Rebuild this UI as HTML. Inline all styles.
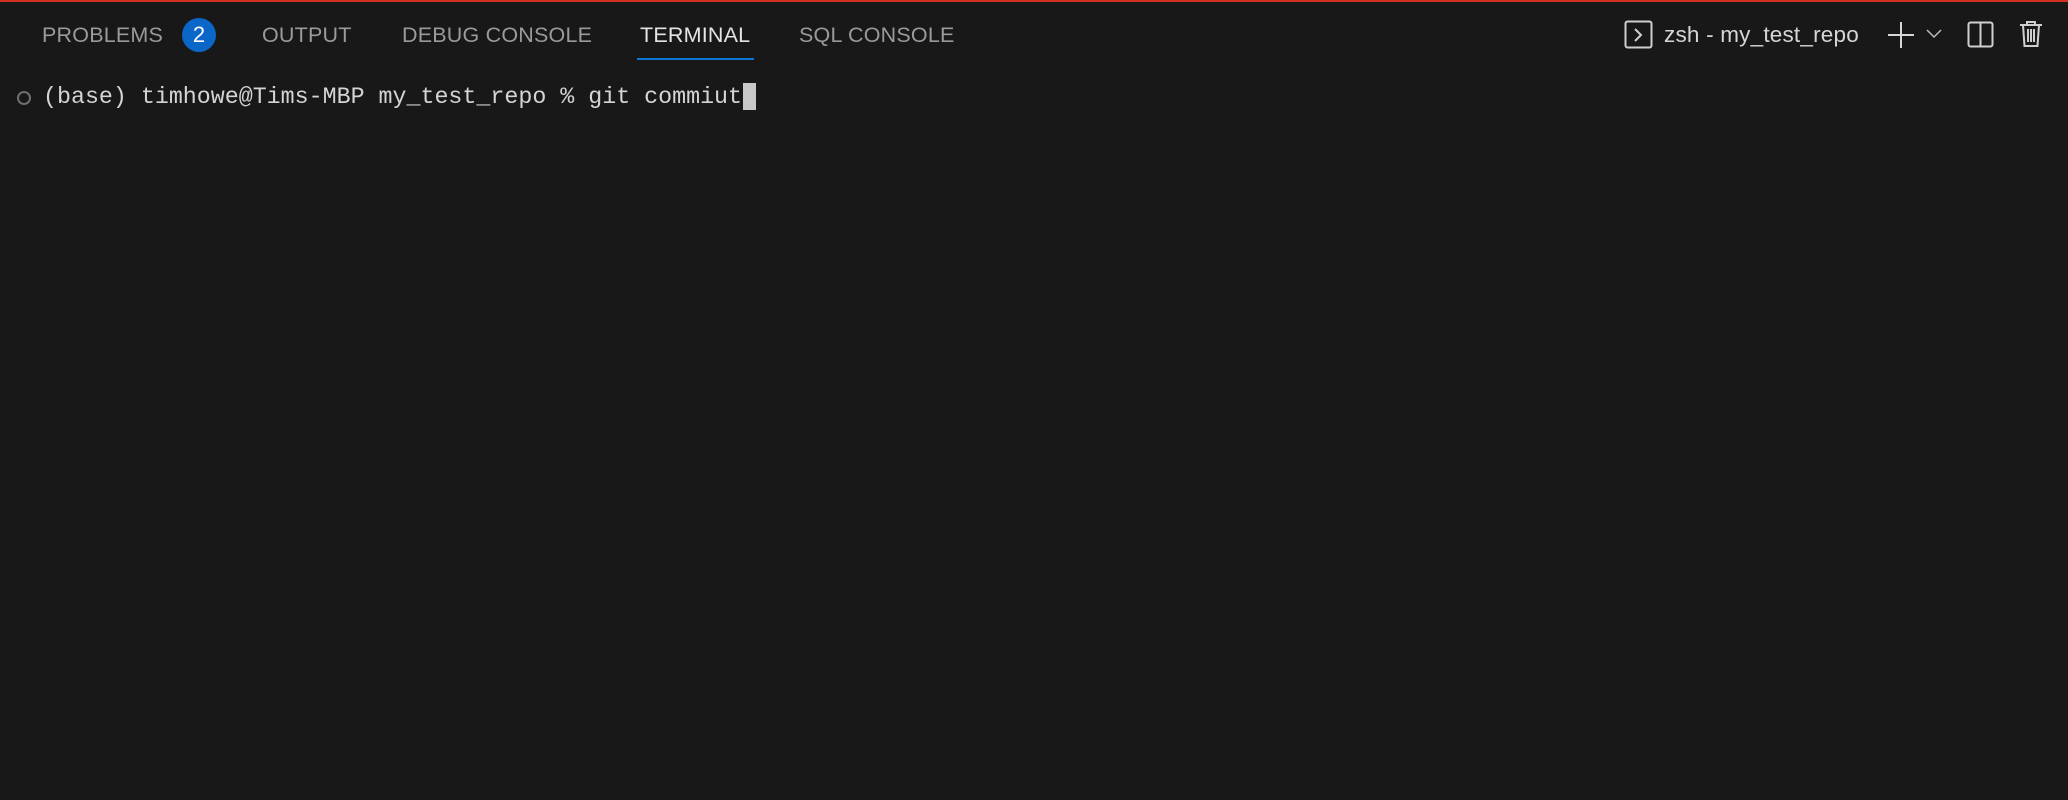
<!DOCTYPE html>
<html><head><style>
body{margin:0;width:2068px;height:800px;background:#181818;overflow:hidden;position:relative;font-family:"Liberation Sans",sans-serif}
.top{position:absolute;left:0;top:0;width:2068px;height:2px;background:#d0301e}
.tab{position:absolute;top:22px;font-size:21.5px;color:#9a9a9a;line-height:26px;letter-spacing:0.2px}
.badge{position:absolute;left:182px;top:18px;width:34px;height:34px;border-radius:50%;background:#0a67c8;color:#fff;font-size:22px;text-align:center;line-height:34px}
.ul{position:absolute;left:637px;top:58px;width:117px;height:2px;background:#0d74d6}
.term{position:absolute;left:43px;top:83px;font-family:"Liberation Mono",monospace;font-size:23.3px;color:#d4d4d4;line-height:28px;white-space:pre}
.cur{position:absolute;left:743px;top:83px;width:13px;height:27px;background:#c8c8c8}
.dot{position:absolute;left:17px;top:91px;width:10px;height:10px;border:2px solid #6f6f6f;border-radius:50%}
svg{position:absolute}
</style></head><body>
<div class="top"></div>
<div class="tab" style="left:42px">PROBLEMS</div>
<div class="badge">2</div>
<div class="tab" style="left:262px">OUTPUT</div>
<div class="tab" style="left:402px">DEBUG CONSOLE</div>
<div class="tab" style="left:640px;color:#e4e4e4">TERMINAL</div>
<div class="ul"></div>
<div class="tab" style="left:799px">SQL CONSOLE</div>
<div class="dot"></div>
<div class="term">(base) timhowe@Tims-MBP my_test_repo % git commiut</div>
<div class="cur"></div>
<svg style="left:1624px;top:20px" width="30" height="30" viewBox="0 0 30 30"><rect x="1.5" y="1.5" width="26" height="26" rx="2" fill="none" stroke="#cfcfcf" stroke-width="2"/><path d="M11 9l6 6-6 6" fill="none" stroke="#cfcfcf" stroke-width="2"/></svg>
<div class="tab" style="left:1664px;color:#d6d6d6;font-size:22.5px">zsh - my_test_repo</div>
<svg style="left:1887px;top:21px" width="28" height="28" viewBox="0 0 28 28"><path d="M14 1v26M1 14h26" stroke="#d6d6d6" stroke-width="2"/></svg>
<svg style="left:1926px;top:29px" width="16" height="10" viewBox="0 0 16 10"><path d="M1 1l7 7 7-7" fill="none" stroke="#bdbdbd" stroke-width="1.5"/></svg>
<svg style="left:1967px;top:21px" width="28" height="28" viewBox="0 0 28 28"><rect x="1.5" y="1.5" width="24" height="24" rx="2" fill="none" stroke="#cfcfcf" stroke-width="2"/><path d="M13.5 1.5v24" stroke="#cfcfcf" stroke-width="2"/></svg>
<svg style="left:2019px;top:20px" width="24" height="28" viewBox="0 0 24 28"><path d="M1 5h22M8 5V2h8v3M4 5l1.5 21h13L20 5M9 9v13M12 9v13M15 9v13" fill="none" stroke="#cfcfcf" stroke-width="2"/></svg>
</body></html>
